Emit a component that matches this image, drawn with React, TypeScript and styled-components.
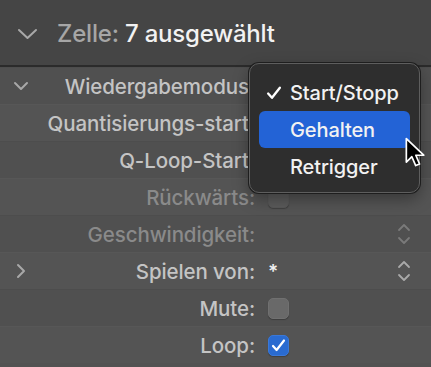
import React from "react";
import styled, { createGlobalStyle } from "styled-components";

const Global = createGlobalStyle`
  html, body { margin: 0; padding: 0; background: #525252; }
  body { font-family: Inter, "Noto Sans", "Liberation Sans", sans-serif; -webkit-font-smoothing: antialiased; }
`;

const Page = styled.div`
  position: relative;
  width: 431px;
  height: 367px;
  overflow: hidden;
  background: #525252;
`;

const Header = styled.div`
  height: 67px;
  background: #454545;
  border-bottom: 2px solid #2b2b2b;
  display: flex;
  align-items: center;
  padding-left: 17px;
  gap: 19px;
  box-sizing: border-box;
  padding-top: 2px;
`;

const HeaderTitle = styled.div`
  font-size: 24px;
  font-weight: 500;
  letter-spacing: -0.2px;
  color: #f2f2f2;
`;

const Dim = styled.span`
  color: #a6a6a6;
`;

const Body = styled.div`
  display: flex;
  flex-direction: column;
`;

const Row = styled.div<{ $alt?: boolean }>`
  height: 37px;
  display: grid;
  grid-template-columns: 40px 215px 1fr;
  align-items: center;
  background: ${(p) => (p.$alt ? "#545454" : "#505050")};
  border-top: 1px solid ${(p) => (p.$alt ? "#575757" : "#4d4d4d")};
  box-sizing: border-box;
`;

const Disclosure = styled.div`
  display: flex;
  align-items: center;
  justify-content: center;
  padding-left: 2px;
  color: #a8a8a8;
`;

const Label = styled.div<{ $disabled?: boolean }>`
  text-align: right;
  font-size: 20.5px;
  font-weight: 500;
  letter-spacing: -0.1px;
  white-space: nowrap;
  color: ${(p) => (p.$disabled ? "#8a8a8a" : "#c4c4c4")};
`;

const Control = styled.div`
  display: flex;
  align-items: center;
  padding-left: 13px;
  padding-right: 20px;
`;

const Value = styled.span`
  font-size: 19px;
  font-weight: 600;
  color: #f0f0f0;
`;

const Checkbox = styled.div<{ $checked?: boolean; $disabled?: boolean }>`
  width: 21px;
  height: 21px;
  border-radius: 5px;
  box-sizing: border-box;
  display: flex;
  align-items: center;
  justify-content: center;
  background: ${(p) => (p.$checked ? "#2a6bd0" : p.$disabled ? "#5b5b5b" : "#696969")};
  border: 1px solid ${(p) => (p.$checked ? "#3a78d8" : p.$disabled ? "#585858" : "#707070")};
  box-shadow: 0 1px 1px rgba(0, 0, 0, 0.25);
`;

const Stepper = styled.div<{ $disabled?: boolean }>`
  margin-left: auto;
  display: flex;
  align-items: center;
  color: ${(p) => (p.$disabled ? "#7a7a7a" : "#a9a9a9")};
`;

const Menu = styled.div`
  position: absolute;
  left: 249px;
  top: 63px;
  width: 171px;
  height: 130px;
  box-sizing: border-box;
  background: #2e2e2e;
  border: 1px solid #5e5e5e;
  border-radius: 10px;
  box-shadow: 0 0 0 1px #1e1e1e, 0 6px 16px rgba(0, 0, 0, 0.35);
  padding: 10px 9px 7px 9px;
  display: flex;
  flex-direction: column;
`;

const MenuItem = styled.div<{ $active?: boolean }>`
  height: 37px;
  border-radius: 6px;
  position: relative;
  display: flex;
  align-items: center;
  padding-left: 31px;
  font-size: 20px;
  font-weight: 500;
  letter-spacing: -0.1px;
  color: #f2f2f2;
  background: ${(p) => (p.$active ? "#2363d6" : "transparent")};
`;

const Check = styled.span`
  position: absolute;
  left: 7px;
  top: 11px;
  display: flex;
`;

const Cursor = styled.svg`
  position: absolute;
  left: 404px;
  top: 137px;
`;

const ChevronDown = () => (
  <svg width="16" height="10" viewBox="0 0 16 10" fill="none">
    <path d="M2 2l6 6 6-6" stroke="currentColor" strokeWidth="2" strokeLinecap="round" strokeLinejoin="round" />
  </svg>
);

const ChevronRight = () => (
  <svg width="10" height="16" viewBox="0 0 10 16" fill="none">
    <path d="M2 2l6 6-6 6" stroke="currentColor" strokeWidth="2" strokeLinecap="round" strokeLinejoin="round" />
  </svg>
);

const StepIcon = () => (
  <svg width="14" height="22" viewBox="0 0 14 22" fill="none">
    <path d="M2 7l5-5 5 5M2 15l5 5 5-5" stroke="currentColor" strokeWidth="1.8" strokeLinecap="round" strokeLinejoin="round" />
  </svg>
);

const Tick = ({ size = 15 }: { size?: number }) => (
  <svg width={size} height={size} viewBox="0 0 15 15" fill="none">
    <path d="M2 8l3.6 4L13 2.5" stroke="#ffffff" strokeWidth="2.2" strokeLinecap="round" strokeLinejoin="round" />
  </svg>
);

export default function App() {
  return (
    <Page>
      <Global />
      <Header>
        <svg width="21" height="12" viewBox="0 0 21 12" fill="none">
          <path d="M2 2l8.5 8 8.5-8" stroke="#a8a8a8" strokeWidth="2" strokeLinecap="round" strokeLinejoin="round" />
        </svg>
        <HeaderTitle>
          <Dim>Zelle:</Dim> 7 ausgewählt
        </HeaderTitle>
      </Header>
      <Body>
        <Row>
          <Disclosure><ChevronDown /></Disclosure>
          <Label>Wiedergabemodus:</Label>
          <Control />
        </Row>
        <Row $alt>
          <Disclosure />
          <Label>Quantisierungs-start:</Label>
          <Control />
        </Row>
        <Row>
          <Disclosure />
          <Label>Q-Loop-Start:</Label>
          <Control />
        </Row>
        <Row $alt>
          <Disclosure />
          <Label $disabled>Rückwärts:</Label>
          <Control><Checkbox $disabled /></Control>
        </Row>
        <Row>
          <Disclosure />
          <Label $disabled>Geschwindigkeit:</Label>
          <Control><Stepper $disabled><StepIcon /></Stepper></Control>
        </Row>
        <Row $alt>
          <Disclosure><ChevronRight /></Disclosure>
          <Label>Spielen von:</Label>
          <Control>
            <Value>*</Value>
            <Stepper><StepIcon /></Stepper>
          </Control>
        </Row>
        <Row>
          <Disclosure />
          <Label>Mute:</Label>
          <Control><Checkbox /></Control>
        </Row>
        <Row $alt>
          <Disclosure />
          <Label>Loop:</Label>
          <Control><Checkbox $checked><Tick /></Checkbox></Control>
        </Row>
      </Body>
      <Menu>
        <MenuItem>
          <Check><Tick size={16} /></Check>
          Start/Stopp
        </MenuItem>
        <MenuItem $active>Gehalten</MenuItem>
        <MenuItem>Retrigger</MenuItem>
      </Menu>
      <Cursor width="26" height="32" viewBox="0 0 24 30">
        <path d="M2 1.5v22l5.2-5 3.6 8.3 3.6-1.5-3.5-8.2h7.4z" fill="#000" stroke="#fff" strokeWidth="1.6" strokeLinejoin="round" />
      </Cursor>
    </Page>
  );
}
